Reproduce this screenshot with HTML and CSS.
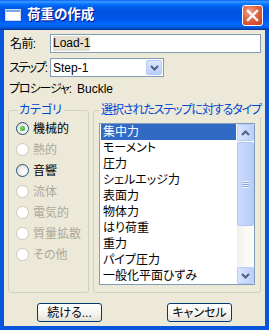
FILE: index.html
```html
<!DOCTYPE html>
<html lang="ja">
<head>
    <meta charset="UTF-8">
    <title>荷重の作成</title>
    <link rel="stylesheet" href="styles.css">
</head>
<body>
    <div class="window">
        <div class="titlebar">
            <svg class="app-icon" width="16" height="12" viewBox="0 0 16 12">
                <rect x="0.5" y="0.5" width="15" height="11" fill="#fff" stroke="#c9d6ee"/>
                <rect x="1" y="1" width="14" height="2" fill="#7fa6e8"/>
            </svg>
            <span class="title">荷重の作成</span>
            <div class="close-btn">
                <svg width="13" height="13" viewBox="0 0 13 13">
                    <path d="M2 2 L11 11 M11 2 L2 11" stroke="#fff" stroke-width="2.4" stroke-linecap="square"/>
                </svg>
            </div>
        </div>
        <div class="client">
            <div class="row">
                <span class="lbl">名前:</span>
                <div class="textbox"><span class="sel-text">Load-1</span></div>
            </div>
            <div class="row row-step">
                <span class="lbl lbl-tight">ステップ:</span>
                <div class="combo">
                    <span class="combo-text">Step-1</span>
                    <span class="drop-btn">
                        <svg width="9" height="6" viewBox="0 0 9 6"><path d="M1 1 L4.5 4.5 L8 1" fill="none" stroke="#4d6185" stroke-width="2"/></svg>
                    </span>
                </div>
            </div>
            <div class="proc">
                <span class="proc-lbl">プロシージャ:</span>
                <span>Buckle</span>
            </div>
            <div class="groups">
                <fieldset class="group cat">
                    <legend>カテゴリ</legend>
                    <div class="radios">
                        <div class="radio checked"><span class="dot"></span>機械的</div>
                        <div class="radio disabled"><span class="dot"></span>熱的</div>
                        <div class="radio"><span class="dot"></span>音響</div>
                        <div class="radio disabled"><span class="dot"></span>流体</div>
                        <div class="radio disabled"><span class="dot"></span>電気的</div>
                        <div class="radio disabled"><span class="dot"></span>質量拡散</div>
                        <div class="radio disabled"><span class="dot"></span>その他</div>
                    </div>
                </fieldset>
                <fieldset class="group types">
                    <legend>選択されたステップに対するタイプ</legend>
                    <div class="listbox">
                        <ul class="items">
                            <li class="selected">集中力</li>
                            <li>モーメント</li>
                            <li>圧力</li>
                            <li>シェルエッジ力</li>
                            <li>表面力</li>
                            <li>物体力</li>
                            <li>はり荷重</li>
                            <li>重力</li>
                            <li>パイプ圧力</li>
                            <li>一般化平面ひずみ</li>
                        </ul>
                        <div class="scrollbar">
                            <div class="sb-btn">
                                <svg width="9" height="6" viewBox="0 0 9 6"><path d="M1 5 L4.5 1.5 L8 5" fill="none" stroke="#4d6185" stroke-width="2"/></svg>
                            </div>
                            <div class="sb-track">
                                <div class="sb-thumb">
                                    <span class="grip"></span>
                                </div>
                            </div>
                            <div class="sb-btn">
                                <svg width="9" height="6" viewBox="0 0 9 6"><path d="M1 1 L4.5 4.5 L8 1" fill="none" stroke="#4d6185" stroke-width="2"/></svg>
                            </div>
                        </div>
                    </div>
                </fieldset>
            </div>
            <div class="buttons">
                <button class="btn">続ける...</button>
                <button class="btn">キャンセル</button>
            </div>
        </div>
    </div>
</body>
</html>
```

FILE: styles.css
```css
body {
    margin: 0;
    font-family: "Liberation Sans", "Noto Sans CJK JP", sans-serif;
    font-size: 12px;
    line-height: 14px;
    font-feature-settings: "palt";
    color: #000;
    background: #fff;
}
.window {
    width: 269px;
    height: 330px;
    background: #0855dd;
    display: flex;
    flex-direction: column;
}
.titlebar {
    height: 30px;
    flex-shrink: 0;
    display: flex;
    align-items: center;
    padding: 0 6px 0 5px;
    box-sizing: border-box;
    background: linear-gradient(to bottom, #0058ee 0%, #3593ff 4%, #288eff 8%, #127dff 12%, #036ffc 16%, #0262ee 22%, #0057e5 30%, #0054e3 40%, #0055eb 60%, #005bf5 70%, #026afe 80%, #0062ef 88%, #0052d6 94%, #0040ab 97%, #003092 100%);
}
.app-icon {
    margin-right: 6px;
}
.title {
    flex: 1;
    color: #fff;
    font-weight: bold;
    font-size: 13.5px;
    text-shadow: 1px 1px #0f1089;
}
.close-btn {
    width: 21px;
    height: 21px;
    box-sizing: border-box;
    border: 1px solid #fff;
    border-radius: 3px;
    background: radial-gradient(circle at 35% 30%, #f0a58d 0%, #e2623f 45%, #c93c1c 100%);
    display: flex;
    align-items: center;
    justify-content: center;
}
.client {
    flex: 1;
    margin: 0 4px 4px 4px;
    background: #ece9d8;
    padding: 4px 4px 0 4px;
    display: flex;
    flex-direction: column;
}
.row {
    display: flex;
    align-items: center;
    height: 19px;
}
.row-step {
    margin-top: 5px;
}
.lbl {
    width: 40px;
    flex-shrink: 0;
    padding-left: 2px;
    white-space: nowrap;
    letter-spacing: -0.6px;
}
.lbl-tight {
    padding-left: 1px;
    width: 41px;
    letter-spacing: -1.6px;
}
.textbox {
    flex: 1;
    height: 19px;
    box-sizing: border-box;
    border: 1px solid #7f9db9;
    background: #fff;
    padding: 1px 2px;
    display: flex;
    align-items: center;
}
.sel-text {
    background: #e4e0cf;
    line-height: 15px;
}
.combo {
    width: 114px;
    height: 19px;
    box-sizing: border-box;
    border: 1px solid #7f9db9;
    background: #fff;
    display: flex;
    align-items: center;
    padding: 1px 1px 1px 2px;
}
.combo-text {
    flex: 1;
}
.drop-btn {
    width: 16px;
    height: 15px;
    box-sizing: border-box;
    border: 1px solid #b6c9f4;
    border-radius: 2px;
    background: linear-gradient(to bottom, #dbe6fe, #b9cefa);
    display: flex;
    align-items: center;
    justify-content: center;
}
.proc {
    margin-top: 4px;
    height: 16px;
    line-height: 16px;
    padding-left: 1px;
    display: flex;
    white-space: nowrap;
}
.proc-lbl {
    width: 68px;
    letter-spacing: -1.1px;
}
.groups {
    margin-top: 6px;
    display: flex;
    gap: 4px;
    height: 190px;
}
.group {
    margin: 0;
    padding: 0;
    border: 1px solid #d0d0bf;
    border-radius: 3px;
    box-sizing: border-box;
    height: 190px;
    min-width: 0;
}
.group legend {
    color: #0046d5;
    padding: 0 2px;
    line-height: 14px;
    white-space: nowrap;
}
.cat {
    width: 81px;
}
.cat legend {
    margin-left: 8px;
}
.types {
    flex: 1;
}
.types legend {
    margin-left: 5px;
    letter-spacing: -1.1px;
}
.radios {
    margin-top: 1px;
    padding-left: 7px;
}
.radio {
    height: 21px;
    display: flex;
    align-items: center;
    gap: 4px;
    white-space: nowrap;
}
.dot {
    width: 13px;
    height: 13px;
    flex-shrink: 0;
    box-sizing: border-box;
    border-radius: 50%;
    border: 1px solid #1c5180;
    background: radial-gradient(circle at 65% 65%, #fff 0%, #f4f3ee 40%, #d6d4cb 100%);
    display: flex;
    align-items: center;
    justify-content: center;
}
.radio.checked .dot::after {
    content: "";
    width: 5px;
    height: 5px;
    border-radius: 50%;
    background: radial-gradient(circle at 40% 40%, #6fe26b, #21a121);
}
.radio.disabled {
    color: #aca899;
}
.radio.disabled .dot {
    border-color: #cac8bb;
    background: #fff;
}
.listbox {
    margin: 6px 5px 0 5px;
    height: 162px;
    box-sizing: border-box;
    border: 1px solid #7f9db9;
    background: #fff;
    display: flex;
}
.items {
    flex: 1;
    list-style: none;
    margin: 0;
    padding: 0 1px;
}
.items li {
    height: 16px;
    line-height: 16px;
    padding-left: 2px;
    white-space: nowrap;
}
.items li.selected {
    background: #316ac5;
    color: #fff;
}
.scrollbar {
    width: 17px;
    display: flex;
    flex-direction: column;
    background: #f7f7f2;
}
.sb-btn {
    height: 17px;
    box-sizing: border-box;
    border: 1px solid #bacbf4;
    border-radius: 2px;
    background: linear-gradient(to right, #d9e5fe, #bccff9);
    display: flex;
    align-items: center;
    justify-content: center;
}
.sb-track {
    flex: 1;
    padding: 1px 0;
    background: linear-gradient(to right, #f3f1ec, #fefefb);
}
.sb-thumb {
    height: 84px;
    box-sizing: border-box;
    border: 1px solid #b2c5f3;
    border-radius: 2px;
    background: linear-gradient(to right, #cbdafd, #b9cdfa);
    display: flex;
    align-items: center;
    justify-content: center;
}
.grip {
    width: 7px;
    height: 7px;
    background: repeating-linear-gradient(to bottom, #eef3fe 0, #eef3fe 1px, #8ca8e6 1px, #8ca8e6 2px);
}
.buttons {
    margin-top: 10px;
    display: flex;
    justify-content: space-between;
    padding: 0 29px;
}
.btn {
    width: 65px;
    height: 19px;
    box-sizing: border-box;
    border: 1px solid #003c74;
    border-radius: 3px;
    background: linear-gradient(to bottom, #fff 0%, #f4f3ee 60%, #e3e1d6 100%);
    font: inherit;
    padding: 0;
    color: #000;
}
```
